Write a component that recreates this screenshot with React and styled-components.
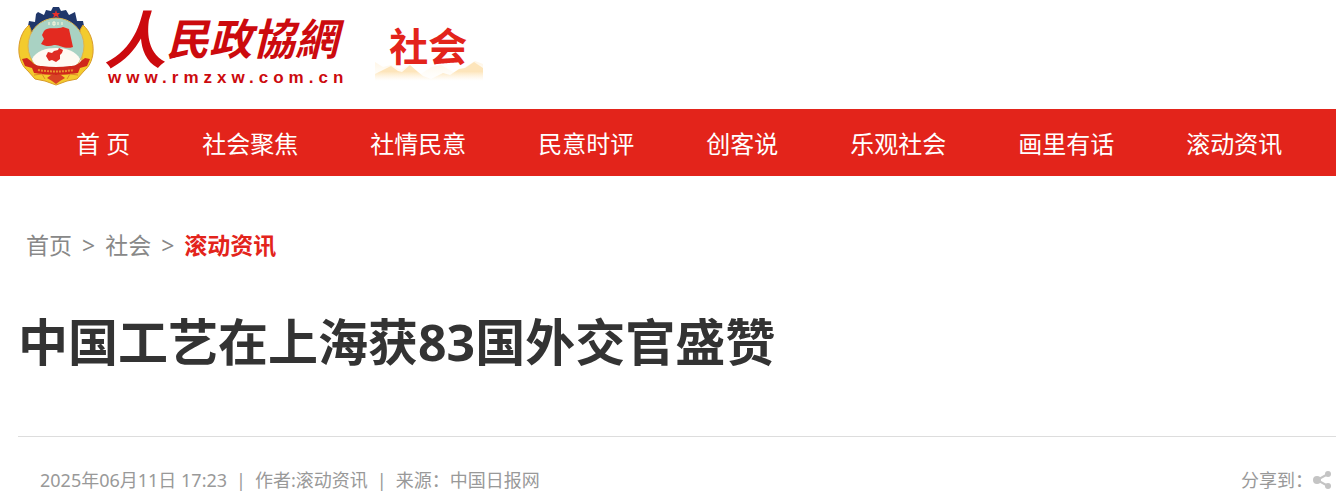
import React from "react";
import styled, { createGlobalStyle } from "styled-components";

const GlobalStyle = createGlobalStyle`
  * { box-sizing: border-box; }
  body {
    margin: 0;
    background: #fff;
    color: #333;
    font-family: "Noto Sans", "Noto Sans CJK SC", sans-serif;
  }
  a { color: inherit; text-decoration: none; }
`;

const Header = styled.header`
  display: flex;
  align-items: flex-start;
  height: 109px;
  padding: 6px 18px 0;
`;

const Brand = styled.a`
  display: flex;
  gap: 10px;
  color: #cc0a0e;
`;

const Emblem = styled.svg`
  display: block;
  width: 76px;
  height: 80px;
`;

const Wordmark = styled.span`
  display: flex;
  flex-direction: column;
`;

const SiteName = styled.span`
  display: flex;
  align-items: center;
  height: 60px;
  font: italic bold 43px/60px "Noto Sans CJK TC", sans-serif;
`;

const Initial = styled.span`
  font-size: 62px;
`;

const Domain = styled.span`
  padding: 2px 0 0 4px;
  font: bold 17px/20px "Liberation Sans", sans-serif;
  letter-spacing: 5px;
`;

const Channel = styled.a`
  display: grid;
  width: 108px;
  margin: 10px 0 0 27px;
  color: #e3241b;
  font-size: 39px;
  font-weight: bold;
  line-height: 60px;

  > * { grid-area: 1 / 1; }
`;

const ChannelName = styled.span`
  padding-left: 14px;
`;

const Mountains = styled.svg`
  display: block;
  align-self: end;
  width: 108px;
  height: 20px;
  margin-top: 45px;
`;

const Nav = styled.nav`
  display: flex;
  align-items: center;
  gap: 72px;
  height: 67px;
  padding: 2px 0 0 76px;
  overflow: hidden;
  background: #e3241b;
  color: #fff;
`;

const NavLink = styled.a`
  flex: none;
  font-size: 24px;
  line-height: 36px;
`;

const Article = styled.main`
  padding-left: 18px;
`;

const Breadcrumb = styled.nav`
  display: flex;
  gap: 10px;
  padding: 52px 8px 0;
  color: #888;
  font-size: 23px;
  line-height: 34px;
`;

const Current = styled.a`
  color: #e3241b;
  font-weight: bold;
`;

const Title = styled.h1`
  margin: 44px 0 58px;
  font-size: 50px;
  font-weight: bold;
  line-height: 72px;
`;

const Meta = styled.div`
  display: flex;
  justify-content: space-between;
  padding: 29px 5px 8px 22px;
  border-top: 1px solid #ddd;
  color: #999;
  font-size: 18px;
  line-height: 28px;
`;

const Details = styled.div`
  display: flex;
  gap: 9px;
`;

const Share = styled.div`
  display: flex;
  align-items: center;
`;

const ShareButton = styled.button`
  display: flex;
  padding: 0;
  border: 0;
  background: none;
  color: #c4c4c4;
  cursor: pointer;
`;

const sections = ["首 页", "社会聚焦", "社情民意", "民意时评", "创客说", "乐观社会", "画里有话", "滚动资讯"];

function EmblemArt() {
  return (
    <Emblem viewBox="0 0 76 80" aria-hidden="true">
      <path d="M9 25 11 15 17 16 18 8 20 6 26 9 28 4 33 5 35 1 41 1 43 5 48 4 51 9 57 6 59 15 65 15 67 25 58 32H18Z" fill="#20376a" />
      <path d="M11 19C4 25 0 36 1 47c1 8 4 14 9 18l7 8 10 2 11 4 11-4 10-2 7-8c5-4 8-10 9-18 1-11-3-22-10-28l-3 5 2 32-26 14L14 56l-1-32Z" fill="#f3cb2d" stroke="#d99a2a" strokeWidth="1" />
      <circle cx="38" cy="40" r="28" fill="#a9d2c3" stroke="#ddb450" strokeWidth="1" />
      <path d="M14 53c4-8 14-11 24-11s20 3 24 11c-2 7-10 11-24 11S16 60 14 53Z" fill="#fffaf2" />
      <path d="M26 25c4-5 12-1 19-4l6 2 4 18c-9 3-13-3-19-2-5 2-9 1-13-1l3-5-2-4Z" fill="#e32a20" />
      <path d="m30 46 4 1 2-2 4-1 1-2 4 2-1 3-2 2v4l-4 3-4-2-3 1-3-5Z" fill="#df2c24" />
      <path d="m4 53 5-1 4 3c3 4 7 5 11 5q14 2 28 0c4 0 8-1 11-5l4-3 5 1-3 7-7 2-2 5q-22 4-44 0l-2-5-7-2Z" fill="#cf281b" />
      <path d="M20 64q18 3 36 0" fill="none" stroke="#ea922f" strokeWidth="2" strokeDasharray="2 1" />
      <path d="m29 72 4-3h10l4 3-5 3-4 3-4-3Z" fill="#d84325" />
      <path d="m16 69 8-1 3 5M60 69l-8-1-3 5" fill="none" stroke="#e0862c" strokeWidth="1" />
      <path d="m38 4 1 3h3l-2 2 1 3-3-2-3 2 1-3-2-2h3Z" fill="#e8302a" />
      <path d="M31 16v3M35 16v3h2v-3zM40 16v3M44 16v3" fill="none" stroke="#fff8dc" strokeWidth="1" />
    </Emblem>
  );
}

function MountainArt() {
  return (
    <Mountains viewBox="0 0 108 20" aria-hidden="true">
      <defs>
        <linearGradient id="haze" x2="0" y2="1">
          <stop stopColor="#fff1d8" stopOpacity=".7" />
          <stop offset="1" stopColor="#fff8ec" stopOpacity="0" />
        </linearGradient>
        <linearGradient id="peak" x2="0" y2="1">
          <stop offset=".5" stopColor="#fde5bb" />
          <stop offset="1" stopColor="#fff4df" stopOpacity="0" />
        </linearGradient>
      </defs>
      <path d="M0 1 8 6l8-2 10 5 8-5 12 9 10-7 10-2 14 8 12-7 8-5 8 3v16H0Z" fill="url(#haze)" />
      <path d="M0 13 8 9l8-4 7 5 4 1 8-7 8 7 5 4 8 3 12-6 7 2 9-6 6-1 9-6 9 6v13H0Z" fill="url(#peak)" />
    </Mountains>
  );
}

export default function App() {
  return (
    <>
      <GlobalStyle />
      <Header>
        <Brand href="#">
          <EmblemArt />
          <Wordmark>
            <SiteName lang="zh-Hant">
              <Initial>人</Initial>
              <span>民政協網</span>
            </SiteName>
            <Domain>www.rmzxw.com.cn</Domain>
          </Wordmark>
        </Brand>
        <Channel href="#">
          <MountainArt />
          <ChannelName>社会</ChannelName>
        </Channel>
      </Header>
      <Nav aria-label="栏目">
        {sections.map((name) => <NavLink href="#" key={name}>{name}</NavLink>)}
      </Nav>
      <Article>
        <Breadcrumb aria-label="当前位置">
          <a href="#">首页</a>
          <span>&gt;</span>
          <a href="#">社会</a>
          <span>&gt;</span>
          <Current href="#">滚动资讯</Current>
        </Breadcrumb>
        <Title>中国工艺在上海获83国外交官盛赞</Title>
        <Meta>
          <Details>
            <time dateTime="2025-06-11T17:23">2025年06月11日 17:23</time>
            <span>|</span>
            <span>作者:滚动资讯</span>
            <span>|</span>
            <span>来源：中国日报网</span>
          </Details>
          <Share>
            <span>分享到：</span>
            <ShareButton type="button" aria-label="分享">
              <svg width="18" height="20" viewBox="0 0 18 20">
                <path d="M15 4 4 10l11 6" fill="none" stroke="currentColor" strokeWidth="2" />
                <g fill="currentColor">
                  <circle cx="4" cy="10" r="4" />
                  <circle cx="15" cy="4" r="3" />
                  <circle cx="15" cy="16" r="3" />
                </g>
              </svg>
            </ShareButton>
          </Share>
        </Meta>
      </Article>
    </>
  );
}
